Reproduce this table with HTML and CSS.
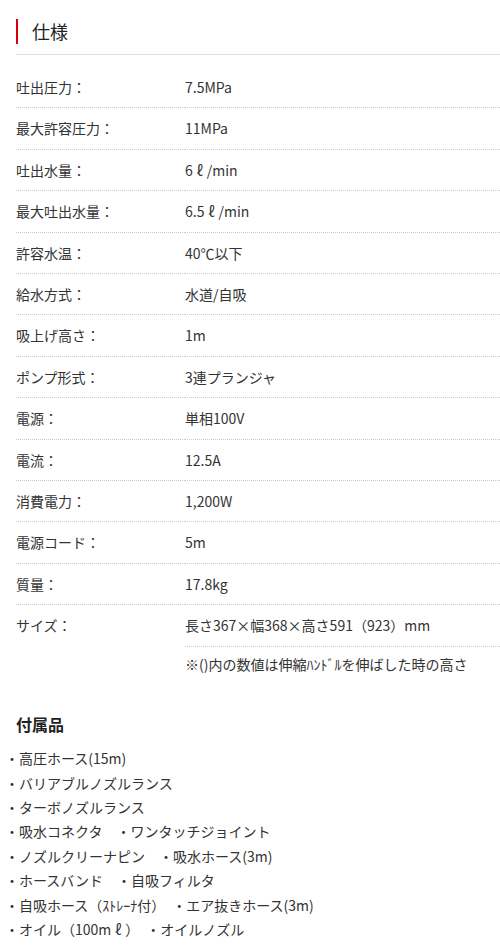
FILE: index.html
```html
<!DOCTYPE html>
<html lang="ja">
<head>
<meta charset="utf-8">
<title>仕様</title>
<link rel="stylesheet" href="styles.css">
</head>
<body>
<div class="page">
  <h2 class="title"><span class="title-text">仕様</span></h2>
  <table class="spec">
    <tbody>
      <tr><th>吐出圧力：</th><td>7.5MPa</td></tr>
      <tr><th>最大許容圧力：</th><td>11MPa</td></tr>
      <tr><th>吐出水量：</th><td>6<span class="fw">ℓ</span>/min</td></tr>
      <tr><th>最大吐出水量：</th><td>6.5<span class="fw">ℓ</span>/min</td></tr>
      <tr><th>許容水温：</th><td>40<span class="fw">℃</span>以下</td></tr>
      <tr><th>給水方式：</th><td>水道/自吸</td></tr>
      <tr><th>吸上げ高さ：</th><td>1m</td></tr>
      <tr><th>ポンプ形式：</th><td>3連プランジャ</td></tr>
      <tr><th>電源：</th><td>単相100V</td></tr>
      <tr><th>電流：</th><td>12.5A</td></tr>
      <tr><th>消費電力：</th><td>1,200W</td></tr>
      <tr><th>電源コード：</th><td>5m</td></tr>
      <tr><th>質量：</th><td>17.8kg</td></tr>
      <tr><th rowspan="2" class="last">サイズ：</th><td>長さ367×幅368×高さ591（923）mm</td></tr>
      <tr><td class="last note">※()内の数値は伸縮ﾊﾝﾄﾞﾙを伸ばした時の高さ</td></tr>
    </tbody>
  </table>
  <h3 class="sub">付属品</h3>
  <ul class="acc">
    <li>・高圧ホース(15m)</li>
    <li>・バリアブルノズルランス</li>
    <li>・ターボノズルランス</li>
    <li>・吸水コネクタ　・ワンタッチジョイント</li>
    <li>・ノズルクリーナピン　・吸水ホース(3m)</li>
    <li>・ホースバンド　・自吸フィルタ</li>
    <li>・自吸ホース（ｽﾄﾚｰﾅ付）　・エア抜きホース(3m)</li>
    <li>・オイル（100m<span class="fw">ℓ</span>）　・オイルノズル</li>
  </ul>
</div>
</body>
</html>
```

FILE: styles.css
```css
html, body {
  margin: 0;
  padding: 0;
  background: #fff;
}
body {
  font-family: "Noto Sans CJK JP", "Noto Sans", sans-serif;
  color: #333;
  font-size: 14px;
}
.page {
  padding-left: 16px;
}
.title {
  margin: 0;
  padding: 19px 0 10px 0;
  border-bottom: 1px solid #ddd;
  font-size: 18px;
  font-weight: normal;
  line-height: 25px;
}
.title-text {
  display: block;
  border-left: 2px solid #d7000f;
  padding-left: 14px;
  color: #222;
}
.fw {
  display: inline-block;
  width: 1em;
  text-align: center;
}
.spec {
  width: 100%;
  margin-top: 12px;
  border-collapse: collapse;
}
.spec th,
.spec td {
  padding: 9px 0;
  line-height: 22.4px;
  text-align: left;
  font-weight: normal;
  vertical-align: top;
  border-bottom: 1px dotted #ccc;
}
.spec th {
  width: 169px;
}
.spec .last {
  border-bottom: none;
}
.spec .note {
  padding-top: 6px;
}
.sub {
  margin: 28px 0 0 0;
  font-size: 16px;
  font-weight: bold;
  line-height: 24px;
  color: #222;
}
.acc {
  list-style: none;
  margin: 10px 0 0 -11px;
  padding: 0;
  line-height: 24.4px;
}
```
